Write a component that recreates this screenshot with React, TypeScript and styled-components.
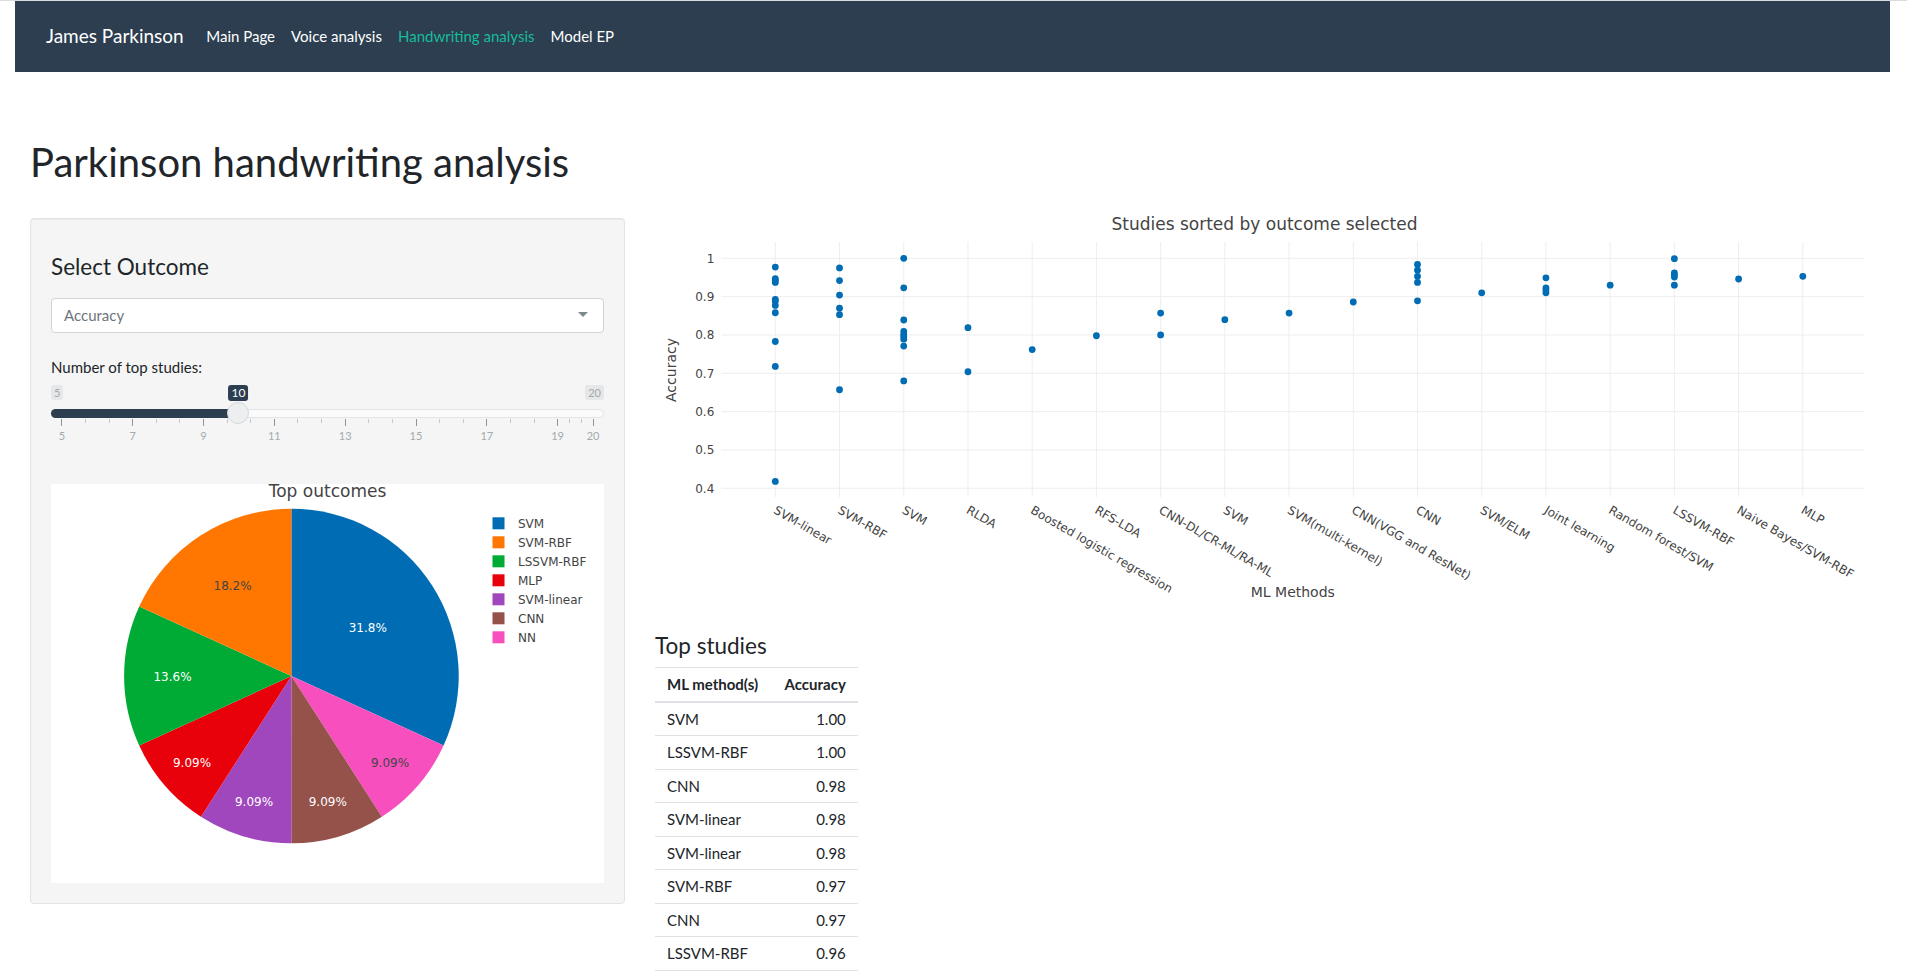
import React from "react";
import styled, { createGlobalStyle } from "styled-components";

const GlobalStyle = createGlobalStyle`
  * { box-sizing: border-box; }
  html { border-top: 1px solid #d9dcdf; }
  html, body { margin: 0; padding: 0; background: #fff; }
  body {
    font-family: Lato, "Noto Sans", sans-serif;
    color: #212529;
    font-size: 15px;
    line-height: 1.5;
  }
  ::-webkit-scrollbar { width: 2px; }
  ::-webkit-scrollbar-track { background: #f1f1f1; }
  ::-webkit-scrollbar-thumb { background: #e2e2e2; }
`;

const Page = styled.div`
  padding: 0 17px 0 15px;
`;

const Navbar = styled.nav`
  height: 71px;
  background: #2c3e50;
  display: flex;
  align-items: center;
  padding-left: 31px;
`;

const Brand = styled.span`
  font-size: 19px;
  color: #fff;
  margin-right: 14.5px;
`;

const NavLink = styled.a<{ $active?: boolean }>`
  font-size: 15px;
  padding: 0 8px;
  color: ${(p) => (p.$active ? "#18bc9c" : "#fff")};
  text-decoration: none;
  cursor: pointer;
`;

const Container = styled.div`
  padding: 0 15px;
`;

const Title = styled.h1`
  margin: 68px 0 34px;
  font-size: 40px;
  font-weight: 400;
  line-height: 1.1;
`;

const Row = styled.div`
  display: flex;
  margin: 0 -15px;
  align-items: flex-start;
`;

const Col = styled.div<{ $span: number }>`
  flex: 0 0 ${(p) => (p.$span / 12) * 100}%;
  max-width: ${(p) => (p.$span / 12) * 100}%;
  padding: 0 15px;
`;

const Well = styled.div`
  background: #f5f5f5;
  border: 1px solid #e3e3e3;
  border-radius: 4px;
  padding: 20px;
  box-shadow: inset 0 1px 1px rgba(0, 0, 0, 0.05);
`;

const SectionHeading = styled.h3<{ $mt?: number; $mb?: number }>`
  margin: ${(p) => p.$mt ?? 16}px 0 ${(p) => p.$mb ?? 0}px;
  font-size: 22.5px;
  font-weight: 400;
  line-height: 1.1;
`;

const SelectBox = styled.div`
  margin-top: 18px;
  height: 35px;
  background: #fff;
  border: 1px solid #ced4da;
  border-radius: 4px;
  padding: 0 15px 0 12px;
  display: flex;
  align-items: center;
  justify-content: space-between;
  color: #6c757d;
  font-size: 15px;
`;

const Caret = styled.span`
  width: 0;
  height: 0;
  border-left: 5px solid transparent;
  border-right: 5px solid transparent;
  border-top: 5px solid #7b8a8b;
  margin-top: -2px;
`;

const ControlLabel = styled.div`
  margin-top: 23px;
  font-size: 15px;
  line-height: 22.5px;
`;

const Slider = styled.div`
  position: relative;
  margin-top: 7px;
  height: 58px;
`;

const EdgeLabel = styled.span<{ $side: "left" | "right" }>`
  position: absolute;
  top: 0;
  ${(p) => p.$side}: 0;
  height: 15px;
  padding: 0 3px;
  background: #e5e7e8;
  border-radius: 3px;
  font-size: 11px;
  line-height: 15px;
  color: #a3aaad;
`;

const ValueLabel = styled.span`
  position: absolute;
  top: 0;
  transform: translateX(-50%);
  height: 16px;
  padding: 0 3px;
  background: #2c3e50;
  border-radius: 3px;
  font-size: 12px;
  line-height: 16px;
  color: #fff;
`;

const Track = styled.div`
  position: absolute;
  top: 24px;
  left: 0;
  right: 0;
  height: 9px;
  border-radius: 5px;
  background: #fbfbfb;
  border: 1px solid #e1e4e6;
`;

const TrackFill = styled.div`
  position: absolute;
  top: 24px;
  left: 0;
  height: 9px;
  border-radius: 5px 0 0 5px;
  background: #2c3e50;
`;

const Handle = styled.div`
  position: absolute;
  top: 17px;
  width: 22px;
  height: 22px;
  transform: translateX(-50%);
  border-radius: 50%;
  background: #eceeef;
  border: 1px solid #d5d9db;
`;

const Tick = styled.div<{ $major?: boolean }>`
  position: absolute;
  top: 34px;
  width: 1px;
  height: ${(p) => (p.$major ? 7 : 4)}px;
  background: ${(p) => (p.$major ? "#8d979b" : "#c3c8ca")};
`;

const TickLabel = styled.span`
  position: absolute;
  top: 44px;
  transform: translateX(-50%);
  font-size: 11px;
  line-height: 13px;
  color: #a3aaad;
`;

const ChartBox = styled.div`
  margin-top: 41px;
  height: 399px;
  background: #fff;
`;

const ChartSvg = styled.svg`
  display: block;
  overflow: visible;
  font-family: "DejaVu Sans", Verdana, sans-serif;
`;

const StudiesTable = styled.table`
  border-collapse: collapse;
  font-size: 15px;
  line-height: 22.5px;
`;

const Th = styled.th<{ $right?: boolean }>`
  padding: 5px 12px 5px ${(p) => (p.$right ? 14.5 : 12)}px;
  font-weight: 700;
  text-align: ${(p) => (p.$right ? "right" : "left")};
  border-top: 1px solid #dee2e6;
  border-bottom: 2px solid #dee2e6;
`;

const Td = styled.td<{ $right?: boolean }>`
  padding: 5px 12px 5px ${(p) => (p.$right ? 14.5 : 12)}px;
  text-align: ${(p) => (p.$right ? "right" : "left")};
  border-bottom: 1px solid #dee2e6;
`;

/* ---------------- slider ---------------- */
const sx = (v: number) => 10.4 + (v - 5) * 35.41;
const majors = [5, 7, 9, 11, 13, 15, 17, 19, 20];
const minors: number[] = [];
for (let i = 0; i < majors.length - 1; i++) {
  const a = majors[i];
  const b = majors[i + 1];
  minors.push(a + (b - a) / 3, a + (2 * (b - a)) / 3);
}

/* ---------------- pie ---------------- */
const PIE = { cx: 240.4, cy: 192, r: 167.3 };
const slices = [
  { name: "SVM", n: 7, color: "#006cb4" },
  { name: "NN", n: 2, color: "#f74fbe" },
  { name: "CNN", n: 2, color: "#94524a" },
  { name: "SVM-linear", n: 2, color: "#a147bd" },
  { name: "MLP", n: 2, color: "#e8000b" },
  { name: "LSSVM-RBF", n: 3, color: "#00ab35" },
  { name: "SVM-RBF", n: 4, color: "#ff7700" },
];
const legendOrder = ["SVM", "SVM-RBF", "LSSVM-RBF", "MLP", "SVM-linear", "CNN", "NN"];
const pctLabels = [
  { t: "31.8%", x: 316.8, y: 143.7, c: "#fff" },
  { t: "18.2%", x: 181.6, y: 101.7, c: "#444" },
  { t: "13.6%", x: 121.5, y: 192.7, c: "#fff" },
  { t: "9.09%", x: 141, y: 278.7, c: "#fff" },
  { t: "9.09%", x: 203, y: 317.7, c: "#fff" },
  { t: "9.09%", x: 276.8, y: 317.7, c: "#fff" },
  { t: "9.09%", x: 339, y: 278.7, c: "#444" },
];

function pt(deg: number) {
  const a = (deg * Math.PI) / 180;
  return [PIE.cx + PIE.r * Math.sin(a), PIE.cy - PIE.r * Math.cos(a)];
}

function PieChart() {
  const total = slices.reduce((s, x) => s + x.n, 0);
  let acc = 0;
  const paths = slices.map((s) => {
    const a0 = (acc / total) * 360;
    acc += s.n;
    const a1 = (acc / total) * 360;
    const [x0, y0] = pt(a0);
    const [x1, y1] = pt(a1);
    const large = a1 - a0 > 180 ? 1 : 0;
    return (
      <path
        key={s.name}
        d={`M${PIE.cx},${PIE.cy} L${x0},${y0} A${PIE.r},${PIE.r} 0 ${large} 1 ${x1},${y1} Z`}
        fill={s.color}
      />
    );
  });
  return (
    <ChartSvg width="553" height="399" viewBox="0 0 553 399">
      <text x="276.5" y="12.5" fontSize="17" fill="#444" textAnchor="middle">
        Top outcomes
      </text>
      {paths}
      {pctLabels.map((l, i) => (
        <text key={i} x={l.x} y={l.y + 4.3} fontSize="12" fill={l.c} textAnchor="middle">
          {l.t}
        </text>
      ))}
      {legendOrder.map((name, i) => {
        const s = slices.find((x) => x.name === name)!;
        const cy = 39.3 + i * 19;
        return (
          <g key={name}>
            <rect x="441.5" y={cy - 6} width="12" height="12" fill={s.color} />
            <text x="467" y={cy + 4.3} fontSize="12" fill="#444">
              {name}
            </text>
          </g>
        );
      })}
    </ChartSvg>
  );
}

/* ---------------- scatter ---------------- */
const cats: { name: string; vals: number[] }[] = [
  { name: "SVM-linear", vals: [0.977, 0.947, 0.943, 0.937, 0.893, 0.888, 0.877, 0.858, 0.783, 0.718, 0.418] },
  { name: "SVM-RBF", vals: [0.975, 0.942, 0.904, 0.87, 0.853, 0.657] },
  { name: "SVM", vals: [1.0, 0.923, 0.839, 0.809, 0.801, 0.796, 0.789, 0.771, 0.68] },
  { name: "RLDA", vals: [0.819, 0.704] },
  { name: "Boosted logistic regression", vals: [0.762] },
  { name: "RFS-LDA", vals: [0.798] },
  { name: "CNN-DL/CR-ML/RA-ML", vals: [0.857, 0.8] },
  { name: "SVM", vals: [0.84] },
  { name: "SVM(multi-kernel)", vals: [0.857] },
  { name: "CNN(VGG and ResNet)", vals: [0.886] },
  { name: "CNN", vals: [0.984, 0.969, 0.953, 0.937, 0.889] },
  { name: "SVM/ELM", vals: [0.91] },
  { name: "Joint learning", vals: [0.949, 0.923, 0.917, 0.91] },
  { name: "Random forest/SVM", vals: [0.93] },
  { name: "LSSVM-RBF", vals: [0.999, 0.962, 0.957, 0.951, 0.93] },
  { name: "Naive Bayes/SVM-RBF", vals: [0.946] },
  { name: "MLP", vals: [0.953] },
];

const PL = 66.3;
const PR = 1209.3;
const PT = 24;
const PB = 279;
const yOf = (v: number) => 40.3 + (1 - v) * 383.3;
const xOf = (i: number) => 120.3 + 64.22 * i;

function ScatterChart() {
  const yt = [1, 0.9, 0.8, 0.7, 0.6, 0.5, 0.4];
  return (
    <ChartSvg width="1220" height="400" viewBox="0 0 1220 400">
      <text x="609.5" y="12" fontSize="17" fill="#444" textAnchor="middle">
        Studies sorted by outcome selected
      </text>
      {cats.map((c, i) => (
        <line key={"v" + i} x1={xOf(i)} x2={xOf(i)} y1={PT} y2={PB} stroke="#eee" strokeWidth="1" />
      ))}
      {yt.map((v) => (
        <line key={"h" + v} x1={PL} x2={PR} y1={yOf(v)} y2={yOf(v)} stroke="#eee" strokeWidth="1" />
      ))}
      {yt.map((v) => (
        <text key={"t" + v} x="59.3" y={yOf(v) + 4.3} fontSize="12" fill="#444" textAnchor="end">
          {v === 1 ? "1" : v.toFixed(1)}
        </text>
      ))}
      {cats.map((c, i) => {
        const x = xOf(i) - 2.5;
        const y = 294.6;
        return (
          <text key={"x" + i} x={x} y={y} fontSize="12" fill="#444" transform={`rotate(30 ${x} ${y})`}>
            {c.name}
          </text>
        );
      })}
      {cats.map((c, i) =>
        c.vals.map((v, j) => <circle key={`p${i}-${j}`} cx={xOf(i)} cy={yOf(v)} r="3.4" fill="#006cb4" />)
      )}
      <text x="16.3" y="152" fontSize="14" fill="#444" textAnchor="middle" transform="rotate(-90 16.3 152)" dy="5">
        Accuracy
      </text>
      <text x="637.8" y="379.3" fontSize="14" fill="#444" textAnchor="middle">
        ML Methods
      </text>
    </ChartSvg>
  );
}

const tableRows: [string, string][] = [
  ["SVM", "1.00"],
  ["LSSVM-RBF", "1.00"],
  ["CNN", "0.98"],
  ["SVM-linear", "0.98"],
  ["SVM-linear", "0.98"],
  ["SVM-RBF", "0.97"],
  ["CNN", "0.97"],
  ["LSSVM-RBF", "0.96"],
  ["LSSVM-RBF", "0.96"],
  ["CNN", "0.95"],
];

export default function App() {
  const value = 10;
  return (
    <>
      <GlobalStyle />
      <Page>
        <Navbar>
          <Brand>James Parkinson</Brand>
          <NavLink>Main Page</NavLink>
          <NavLink>Voice analysis</NavLink>
          <NavLink $active>Handwriting analysis</NavLink>
          <NavLink>Model EP</NavLink>
        </Navbar>
        <Container>
          <Title>Parkinson handwriting analysis</Title>
          <Row>
            <Col $span={4}>
              <Well>
                <SectionHeading>Select Outcome</SectionHeading>
                <SelectBox>
                  <span>Accuracy</span>
                  <Caret />
                </SelectBox>
                <ControlLabel>Number of top studies:</ControlLabel>
                <Slider>
                  <EdgeLabel $side="left">5</EdgeLabel>
                  <EdgeLabel $side="right">20</EdgeLabel>
                  <Track />
                  <TrackFill style={{ width: sx(value) }} />
                  {minors.map((m) => (
                    <Tick key={"m" + m} style={{ left: sx(m) }} />
                  ))}
                  {majors.map((m) => (
                    <Tick key={"M" + m} $major style={{ left: sx(m) }} />
                  ))}
                  {majors.map((m) => (
                    <TickLabel key={"L" + m} style={{ left: sx(m) + 0.5 }}>
                      {m}
                    </TickLabel>
                  ))}
                  <Handle style={{ left: sx(value) }} />
                  <ValueLabel style={{ left: sx(value) }}>{value}</ValueLabel>
                </Slider>
                <ChartBox>
                  <PieChart />
                </ChartBox>
              </Well>
            </Col>
            <Col $span={8}>
              <ScatterChart />
              <SectionHeading $mt={16} $mb={8.5}>
                Top studies
              </SectionHeading>
              <StudiesTable>
                <thead>
                  <tr>
                    <Th>ML method(s)</Th>
                    <Th $right>Accuracy</Th>
                  </tr>
                </thead>
                <tbody>
                  {tableRows.map(([m, a], i) => (
                    <tr key={i}>
                      <Td>{m}</Td>
                      <Td $right>{a}</Td>
                    </tr>
                  ))}
                </tbody>
              </StudiesTable>
            </Col>
          </Row>
        </Container>
      </Page>
    </>
  );
}
